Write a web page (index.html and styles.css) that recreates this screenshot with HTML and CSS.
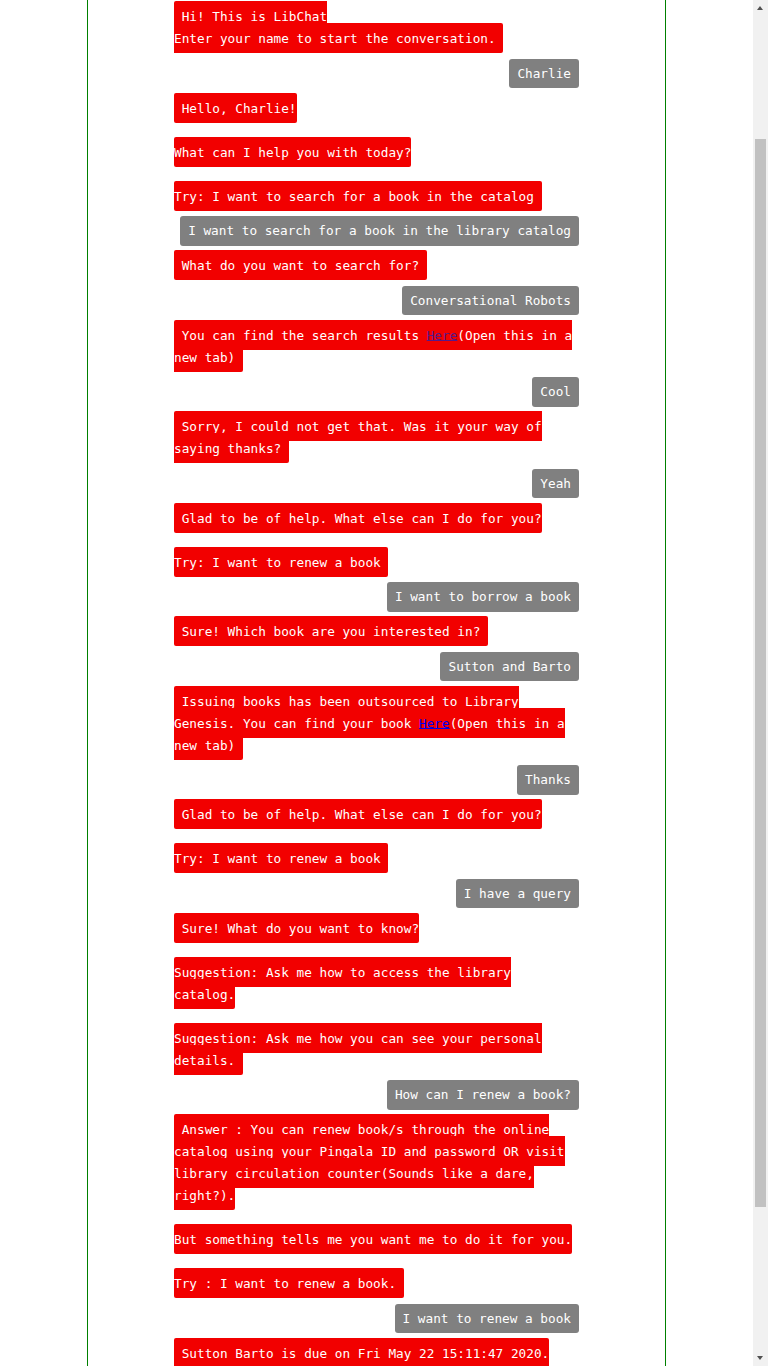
FILE: index.html
```html
<!DOCTYPE html>
<html lang="en">
<head>
<meta charset="utf-8">
<title>LibChat</title>
<link rel="stylesheet" href="styles.css">
</head>
<body>
<div class="page">
  <div class="chat">
    <div class="bot"><span class="msg">&nbsp;Hi! This is LibChat<br>Enter your name to start the conversation.&nbsp;</span></div>
    <div class="user"><span class="msg">Charlie</span></div>
    <div class="bot"><span class="msg">&nbsp;Hello, Charlie!</span><br><br><span class="msg">What can I help you with today?</span><br><br><span class="msg">Try: I want to search for a book in the catalog&nbsp;</span></div>
    <div class="user"><span class="msg">I want to search for a book in the library catalog</span></div>
    <div class="bot"><span class="msg">&nbsp;What do you want to search for?&nbsp;</span></div>
    <div class="user"><span class="msg">Conversational Robots</span></div>
    <div class="bot"><span class="msg">&nbsp;You can find the search results <a href="#" class="visited">Here</a>(Open this in a new tab)&nbsp;</span></div>
    <div class="user"><span class="msg">Cool</span></div>
    <div class="bot"><span class="msg">&nbsp;Sorry, I could not get that. Was it your way of saying thanks?&nbsp;</span></div>
    <div class="user"><span class="msg">Yeah</span></div>
    <div class="bot"><span class="msg">&nbsp;Glad to be of help. What else can I do for you?</span><br><br><span class="msg">Try: I want to renew a book&nbsp;</span></div>
    <div class="user"><span class="msg">I want to borrow a book</span></div>
    <div class="bot"><span class="msg">&nbsp;Sure! Which book are you interested in?&nbsp;</span></div>
    <div class="user"><span class="msg">Sutton and Barto</span></div>
    <div class="bot"><span class="msg">&nbsp;Issuing books has been outsourced to Library Genesis. You can find your book <a href="#">Here</a>(Open this in a new tab)&nbsp;</span></div>
    <div class="user"><span class="msg">Thanks</span></div>
    <div class="bot"><span class="msg">&nbsp;Glad to be of help. What else can I do for you?</span><br><br><span class="msg">Try: I want to renew a book&nbsp;</span></div>
    <div class="user"><span class="msg">I have a query</span></div>
    <div class="bot"><span class="msg">&nbsp;Sure! What do you want to know?</span><br><br><span class="msg">Suggestion: Ask me how to access the library catalog.</span><br><br><span class="msg">Suggestion: Ask me how you can see your personal details.&nbsp;</span></div>
    <div class="user"><span class="msg">How can I renew a book?</span></div>
    <div class="bot"><span class="msg">&nbsp;Answer : You can renew book/s through the online catalog using your Pingala ID and password OR visit library circulation counter(Sounds like a dare, right?).</span><br><br><span class="msg">But something tells me you want me to do it for you.</span><br><br><span class="msg">Try : I want to renew a book.&nbsp;</span></div>
    <div class="user"><span class="msg">I want to renew a book</span></div>
    <div class="bot"><span class="msg">&nbsp;Sutton Barto is due on Fri May 22 15:11:47 2020.</span></div>
  </div>
</div>
<div class="scrollbar" aria-hidden="true">
  <div class="sb-arrow sb-up"></div>
  <div class="sb-thumb"></div>
  <div class="sb-arrow sb-down"></div>
</div>
</body>
</html>
```

FILE: styles.css
```css
html, body {
  margin: 0;
  padding: 0;
  background: #ffffff;
}

body {
  margin-right: 15px;
  font-family: "DejaVu Sans Mono", monospace;
  font-size: 12.72px;
  color: #000;
  overflow-x: hidden;
}

.page {
  box-sizing: border-box;
  width: 579px;
  margin: 0 auto;
  border-left: 1px solid #008000;
  border-right: 1px solid #008000;
  padding: 5.5px 86px 345px;
}

.chat {
  display: flex;
  flex-direction: column;
  gap: 9px;
}

.bot {
  line-height: 22px;
}

.bot .msg {
  background: #f20000;
  color: #ffffff;
  padding: 7.5px 0;
  border-radius: 2px;
}

.bot a {
  color: #0000ee;
  text-decoration: underline;
}

.bot a.visited {
  color: #551a8b;
}

.user {
  display: flex;
  justify-content: flex-end;
}

.user .msg {
  background: #808080;
  color: #ffffff;
  padding: 7.25px 8px;
  line-height: 15px;
  border-radius: 3px;
}

/* browser scrollbar as drawn in the reference */
.scrollbar {
  position: fixed;
  top: 0;
  right: 0;
  width: 15px;
  height: 100vh;
  background: #f1f1f1;
}

.sb-thumb {
  position: absolute;
  left: 2px;
  top: 139px;
  width: 11px;
  height: 1068px;
  background: #c1c1c1;
}

.sb-arrow {
  position: absolute;
  left: 4px;
  width: 0;
  height: 0;
  border-left: 3.5px solid transparent;
  border-right: 3.5px solid transparent;
}

.sb-up {
  top: 6px;
  border-bottom: 4px solid #505050;
}

.sb-down {
  bottom: 6px;
  border-top: 4px solid #505050;
}
```
